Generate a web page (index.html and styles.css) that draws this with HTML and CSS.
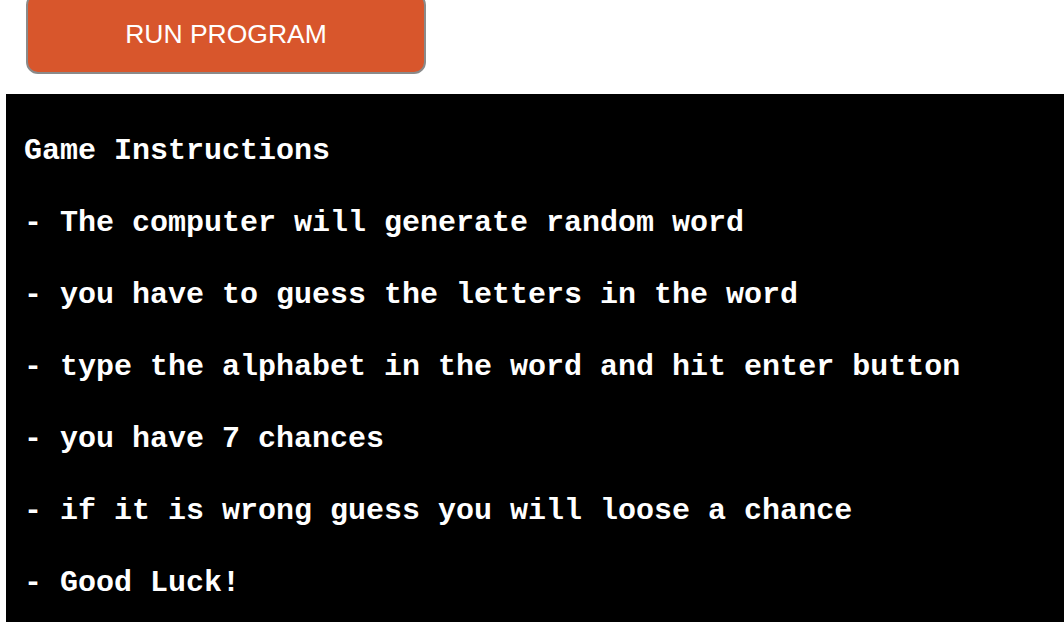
FILE: index.html
```html
<!DOCTYPE html>
<html>
<head>
<meta charset="utf-8">
<link rel="stylesheet" href="styles.css">
</head>
<body>
<div class="page">
  <button class="run-btn">RUN PROGRAM</button>
  <div class="terminal">
    <div class="row"></div>
    <div class="row">Game Instructions</div>
    <div class="row"></div>
    <div class="row">- The computer will generate random word</div>
    <div class="row"></div>
    <div class="row">- you have to guess the letters in the word</div>
    <div class="row"></div>
    <div class="row">- type the alphabet in the word and hit enter button</div>
    <div class="row"></div>
    <div class="row">- you have 7 chances</div>
    <div class="row"></div>
    <div class="row">- if it is wrong guess you will loose a chance</div>
    <div class="row"></div>
    <div class="row">- Good Luck!</div>
    <div class="row"></div>
    <div class="row"></div>
  </div>
</div>
</body>
</html>
```
FILE: styles.css
```css
html, body {
  margin: 0;
  padding: 0;
  background: #fff;
  overflow: hidden;
}
.page {
  display: flex;
  flex-direction: column;
  align-items: flex-start;
}
.run-btn {
  margin: -7px 0 0 26px;
  width: 400px;
  height: 81px;
  padding: 2px 0 0 0;
  box-sizing: border-box;
  background: #d8562c;
  border: 2px solid #8a8a8a;
  border-radius: 12px;
  color: #fff;
  font-family: "Liberation Sans", Arial, sans-serif;
  font-size: 26.5px;
  text-align: center;
}
.terminal {
  margin: 20px 0 0 6px;
  padding: 3px 0 0 18px;
  align-self: stretch;
  background: #000;
  color: #fff;
  font-family: "Liberation Mono", "Courier New", monospace;
  font-weight: bold;
  font-size: 30px;
}
.row {
  height: 36px;
  line-height: 36px;
  white-space: pre;
}
```
